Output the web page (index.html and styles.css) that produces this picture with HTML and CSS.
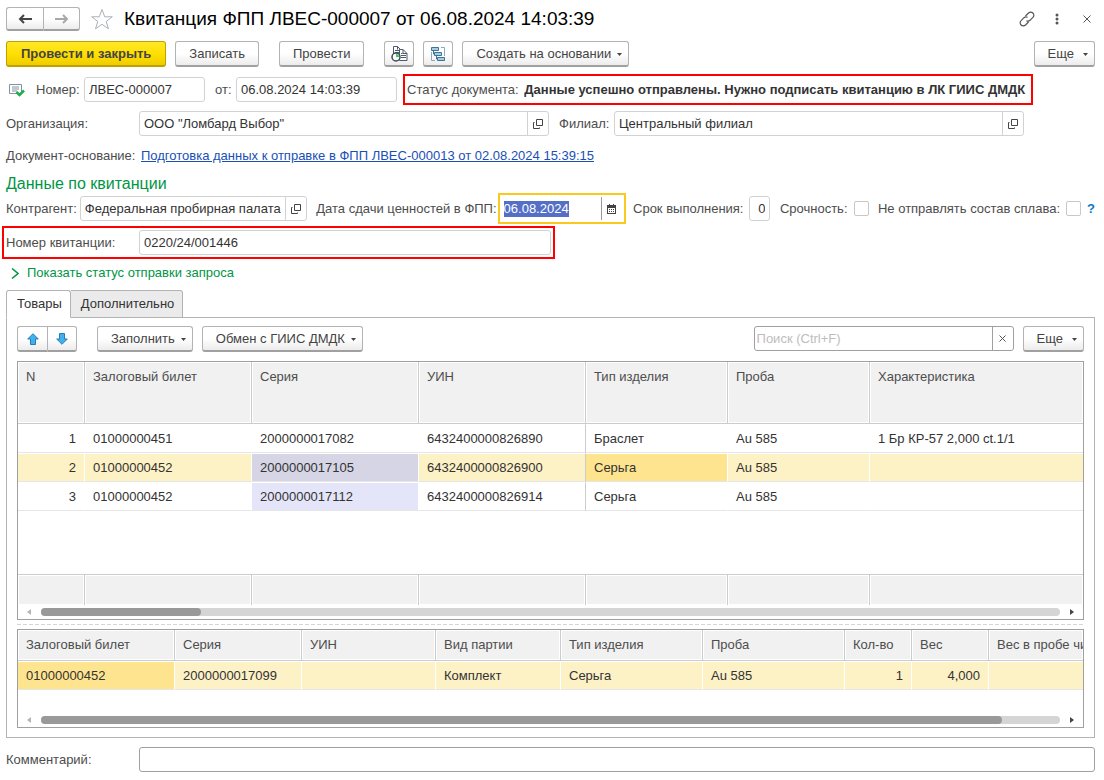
FILE: index.html
```html
<!DOCTYPE html>
<html lang="ru">
<head>
<meta charset="utf-8">
<title>Квитанция ФПП ЛВЕС-000007</title>
<link rel="stylesheet" href="styles.css">
</head>
<body>
<svg class="defs" aria-hidden="true">
  <symbol id="open" viewBox="0 0 10 10"><path d="M3.500 .5h6v6h-6zM1.500 3.500h-1v6h6v-1" fill="none" stroke="#444"/></symbol>
  <symbol id="caret" viewBox="0 0 5 3"><path d="M0 0h5L2.500 3z" fill="#444"/></symbol>
  <symbol id="left" viewBox="0 0 4 6"><path d="M4 0v6L0 3z" fill="#b5b5b5"/></symbol>
  <symbol id="right" viewBox="0 0 4 6"><path d="M0 0v6L4 3z" fill="#444"/></symbol>
</svg>
<main class="page">
  <header class="titlebar">
    <div class="pair">
      <button class="btn" aria-label="Назад"><svg width="15" height="10" viewBox="0 0 15 10"><path d="M14 5H3M6 1L2 5l4 4" fill="none" stroke="#444" stroke-width="2"/></svg></button>
      <button class="btn" aria-label="Вперед"><svg width="15" height="10" viewBox="0 0 15 10"><path d="M1 5h11M9 1l4 4-4 4" fill="none" stroke="#a8a8a8" stroke-width="2"/></svg></button>
    </div>
    <button class="plain star" aria-label="В избранное"><svg width="24" height="22" viewBox="0 0 24 22"><path d="M12 1.500l2.700 7.300h7.600l-6.100 4.700 2.300 7.300-6.500-4.500-6.500 4.500 2.300-7.300-6.100-4.700h7.600z" fill="#fff" stroke="#a9b0b9"/></svg></button>
    <h1 class="title">Квитанция ФПП ЛВЕС-000007 от 06.08.2024 14:03:39</h1>
    <div class="window-tools">
      <button class="plain" aria-label="Ссылка"><svg width="16" height="16" viewBox="0 0 16 16" fill="none" stroke="#555" stroke-width="1.200"><path d="M6.500 5l3-3a3 3 0 0 1 4.400 0 3 3 0 0 1 0 4.400L11 9.300a3 3 0 0 1-3.600.4M9.500 11l-3 3a3 3 0 0 1-4.400 0 3 3 0 0 1 0-4.400L5 6.700a3 3 0 0 1 3.600-.4"/></svg></button>
      <button class="plain" aria-label="Меню"><svg width="4" height="12" viewBox="0 0 4 12" fill="#555"><circle cx="2" cy="2" r="1.500"/><circle cx="2" cy="6" r="1.500"/><circle cx="2" cy="10" r="1.500"/></svg></button>
      <button class="plain" aria-label="Закрыть"><svg width="8" height="8" viewBox="0 0 8 8"><path d="M.5.5l7 7M7.500.5l-7 7" stroke="#555"/></svg></button>
    </div>
  </header>

  <div class="commands">
    <button class="btn primary">Провести и закрыть</button>
    <button class="btn">Записать</button>
    <button class="btn spaced">Провести</button>
    <button class="btn icon spaced" aria-label="Движения документа"><svg width="17" height="16" viewBox="0 0 17 16"><path d="M2.500 9V.5h4l2.500 2.500v8" fill="#fff" stroke="#4d5a6b"/><path d="M6.500.5v3M4 4.500h4M4 6.500h4" fill="none" stroke="#4d5a6b"/><path d="M8.500 3.500h3.500l4 4v7H8.500z" fill="#fff" stroke="#4d5a6b"/><path d="M12 3.500v4h4M10 7.500h1.500M10 9.500h5M10 11.500h5" fill="none" stroke="#4d5a6b"/><circle cx="5" cy="11" r="4" fill="#fff" stroke="#3c4b57" stroke-width="1.500"/><path d="M5 8a3 3 0 0 1 3 3H5z" fill="#3ccb55"/></svg></button>
    <button class="btn icon" aria-label="Структура подчиненности"><svg width="16" height="16" viewBox="0 0 16 16" fill="#a9cbe3" stroke="#3d7397"><path d="M11 1.500h3.500V10M1.500 6v8.500H5" fill="none" stroke="#8aa9bd"/><path d="M1.500 1.500h7v3h-7zM4.500 6.500h7v3h-7zM7.500 11.500h7v3h-7z"/><path d="M3.500 5v3H4M6.500 10v3H7" fill="none"/></svg></button>
    <button class="btn menu">Создать на основании<svg class="caret"><use href="#caret"/></svg></button>
    <button class="btn menu more push">Еще<svg class="caret"><use href="#caret"/></svg></button>
  </div>

  <div class="row">
    <svg width="17" height="14" viewBox="0 0 17 14"><path d="M.5 1.500h12v9H.5z" fill="#fff" stroke="#8491a3"/><path d="M3 4h7M3 6h7M3 8h5" stroke="#8491a3"/><path d="M7.500 9l3 3L15 7.500" fill="none" stroke="#1fae4b" stroke-width="2.500"/></svg>
    <label class="after-icon" for="num">Номер:</label>
    <input class="field w-num" id="num" value="ЛВЕС-000007">
    <label class="from" for="dt">от:</label>
    <input class="field w-date" id="dt" value="06.08.2024 14:03:39">
    <div class="status marked">Статус документа: <b>Данные успешно отправлены. Нужно подписать квитанцию в ЛК ГИИС ДМДК</b></div>
  </div>

  <div class="row orgs">
    <label class="lead" for="org">Организация:</label>
    <div class="combo w-org"><input id="org" value='ООО "Ломбард Выбор"'><button aria-label="Открыть организацию"><svg width="10" height="10"><use href="#open"/></svg></button></div>
    <label class="branch" for="fil">Филиал:</label>
    <div class="combo w-org"><input id="fil" value="Центральный филиал"><button aria-label="Открыть филиал"><svg width="10" height="10"><use href="#open"/></svg></button></div>
  </div>

  <div class="row base">
    <span class="lead">Документ-основание:</span>
    <a class="link" href="#">Подготовка данных к отправке в ФПП ЛВЕС-000013 от 02.08.2024 15:39:15</a>
  </div>

  <h2 class="section">Данные по квитанции</h2>

  <div class="row spread">
    <div class="item tight"><label for="agent">Контрагент:</label><div class="combo w-agent"><input id="agent" value="Федеральная пробирная палата"><button aria-label="Открыть контрагента"><svg width="10" height="10"><use href="#open"/></svg></button></div></div>
    <div class="item tight"><label for="handover">Дата сдачи ценностей в ФПП:</label><div class="combo current"><input id="handover" value="06.08.2024"><button aria-label="Календарь"><svg width="9" height="10" viewBox="0 0 9 10"><path d="M0 1h9v9H0z" fill="#444"/><path d="M1 4h7v5H1z" fill="#fff"/><path d="M2 5.500h1m1 0h1m1 0h1M2 7.500h1m1 0h1m1 0h1M2.500 0v2M6.500 0v2" stroke="#444"/></svg></button></div></div>
    <div class="item"><label for="term">Срок выполнения:</label><input class="field w-term" id="term" value="0"></div>
    <div class="item"><label for="urgent">Срочность:</label><input class="check" type="checkbox" id="urgent"></div>
    <div class="item"><label for="alloy">Не отправлять состав сплава:</label><input class="check" type="checkbox" id="alloy"><button class="plain help">?</button></div>
  </div>

  <div class="row receipt marked">
    <label class="lead" for="rec">Номер квитанции:</label>
    <input class="field grow" id="rec" value="0220/24/001446">
  </div>

  <button class="plain toggle"><svg width="8" height="11" viewBox="0 0 8 11"><path d="M1 .5l6 5-6 5" fill="none" stroke="#009646" stroke-width="1.500"/></svg>Показать статус отправки запроса</button>

  <div class="tabs" role="tablist">
    <button class="tab active" role="tab" aria-selected="true">Товары</button>
    <button class="tab" role="tab" aria-selected="false">Дополнительно</button>
  </div>

  <section class="panel">
    <div class="toolbar">
      <div class="pair arrows">
        <button class="btn" aria-label="Вверх"><svg width="12" height="12" viewBox="0 0 12 12"><path d="M6 .7L11.300 6H8.500v5.500h-5V6H.7z" fill="#3fb1f0" stroke="#2a7cb0"/></svg></button>
        <button class="btn" aria-label="Вниз"><svg width="12" height="12" viewBox="0 0 12 12"><path d="M6 11.300L.7 6h2.800V.5h5V6h2.800z" fill="#3fb1f0" stroke="#2a7cb0"/></svg></button>
      </div>
      <button class="btn menu spaced">Заполнить<svg class="caret"><use href="#caret"/></svg></button>
      <button class="btn menu">Обмен с ГИИС ДМДК<svg class="caret"><use href="#caret"/></svg></button>
      <div class="combo search push"><input aria-label="Поиск" placeholder="Поиск (Ctrl+F)"><button aria-label="Очистить"><svg width="7" height="7" viewBox="0 0 7 7"><path d="M.5.5l6 6M6.500.5l-6 6" stroke="#555"/></svg></button></div>
      <button class="btn menu more">Еще<svg class="caret"><use href="#caret"/></svg></button>
    </div>

    <div class="grid-box goods">
      <div class="grid-view">
        <table class="grid">
          <colgroup><col class="c67"><col class="c167"><col class="c167"><col class="c167"><col class="c142"><col class="c142"><col></colgroup>
          <thead><tr><th>N</th><th>Залоговый билет</th><th>Серия</th><th>УИН</th><th>Тип изделия</th><th>Проба</th><th>Характеристика</th></tr></thead>
          <tbody>
            <tr><td class="num">1</td><td>01000000451</td><td>2000000017082</td><td class="frozen">6432400000826890</td><td>Браслет</td><td>Au 585</td><td>1 Бр КР-57 2,000 ct.1/1</td></tr>
            <tr class="selected"><td class="num">2</td><td>01000000452</td><td class="series">2000000017105</td><td class="frozen">6432400000826900</td><td class="cursor">Серьга</td><td>Au 585</td><td></td></tr>
            <tr><td class="num">3</td><td>01000000452</td><td class="series">2000000017112</td><td class="frozen">6432400000826914</td><td>Серьга</td><td>Au 585</td><td></td></tr>
            <tr class="filler"><td colspan="7"></td></tr>
          </tbody>
          <tfoot><tr><td></td><td></td><td></td><td></td><td></td><td></td><td></td></tr></tfoot>
        </table>
      </div>
      <div class="scroll"><svg width="4" height="6"><use href="#left"/></svg><div class="track"><div class="thumb" style="width:15.700%"></div></div><svg width="4" height="6"><use href="#right"/></svg></div>
    </div>

    <div class="splitter"></div>

    <div class="grid-box parts">
      <div class="grid-view">
        <table class="grid">
          <colgroup><col class="c157"><col class="c127"><col class="c134"><col class="c125"><col class="c142"><col class="c142"><col class="c67"><col class="c77"><col></colgroup>
          <thead><tr><th>Залоговый билет</th><th>Серия</th><th>УИН</th><th>Вид партии</th><th>Тип изделия</th><th>Проба</th><th>Кол-во</th><th>Вес</th><th class="cut">Вес в пробе чи</th></tr></thead>
          <tbody><tr class="selected"><td class="cursor">01000000452</td><td>2000000017099</td><td></td><td>Комплект</td><td>Серьга</td><td>Au 585</td><td class="num">1</td><td class="num">4,000</td><td></td></tr></tbody>
        </table>
      </div>
      <div class="scroll"><svg width="4" height="6"><use href="#left"/></svg><div class="track"><div class="thumb" style="width:94.300%"></div></div><svg width="4" height="6"><use href="#right"/></svg></div>
    </div>
  </section>

  <div class="row comment">
    <label class="lead" for="com">Комментарий:</label>
    <input class="field dark grow" id="com">
  </div>
</main>
<script src="page.js"></script>
</body>
</html>
```
FILE: page.js
```js
var handover = document.getElementById('handover');
handover.focus();
handover.select();
```
FILE: styles.css
```css
* { box-sizing: border-box; }
body { margin: 0; background: #fff; }
body, button, input { font-family: "Liberation Sans", Arial, sans-serif; font-size: 13px; line-height: 16px; color: #333; }
button, input { margin: 0; }
svg { display: block; flex: none; }
.defs { position: absolute; width: 0; height: 0; }
.page { display: flex; flex-direction: column; min-height: 100vh; padding: 7px 9px 8px 6px; color: #4d4d4d; }

.btn { display: flex; align-items: center; justify-content: center; height: 26px; padding: 0 13px; border: 1px solid #b3b3b3; border-bottom: 2px solid #a0a0a0; border-radius: 3px; background: linear-gradient(#fff 50%, #ececec); color: #444; white-space: nowrap; }
.primary { padding: 0 14px; border-color: #bfa100; background: linear-gradient(#ffe829, #ffe000 50%, #efcd00); font-weight: bold; }
.icon { width: 30px; padding: 0; }
.menu { padding: 0 6px 0 13px; gap: 6px; }
.more { gap: 9px; }
.caret { width: 5px; height: 3px; margin-top: 2px; }
.plain { display: flex; align-items: center; padding: 0; border: 0; background: none; }
.pair { display: flex; }
.pair .btn { width: 37px; height: 24px; padding: 0; }
.pair .btn:first-child { border-radius: 3px 0 0 3px; border-right: 0; }
.pair .btn:last-child { border-radius: 0 3px 3px 0; }
.arrows .btn { width: 30px; height: 26px; }
.push { margin-left: auto; }

.titlebar { display: flex; align-items: center; height: 24px; }
.star { margin: 0 10px; }
.title { margin: 0; font-size: 19px; line-height: 24px; font-weight: normal; color: #000; white-space: nowrap; }
.window-tools { display: flex; align-items: center; gap: 14px; margin-left: auto; }
.window-tools .plain { width: 16px; justify-content: center; }

.commands { display: flex; gap: 9px; margin-top: 10px; }
.commands .spaced { margin-left: 11px; }

.row { display: flex; align-items: center; height: 25px; margin-top: 10px; white-space: nowrap; }
.row > svg { margin-left: 3px; }
.lead { width: 133px; flex: none; }
.after-icon { width: 48px; margin-left: 10px; }
.from { width: 21px; margin-left: 10px; }
.field { height: 25px; padding: 0 4px; border: 1px solid #d2d2d2; border-radius: 3px; background: #fff; outline: 0; min-width: 0; }
.dark { border-color: #a0a0a0; }
.grow { flex: 1; }
.w-num { width: 121px; }
.w-date { width: 161px; }
.w-term { width: 21px; text-align: right; }
.status { margin-left: 8px; padding: 0 6px 0 2px; line-height: 27px; }
.status b { margin-left: 2px; color: #333; }
.marked { outline: 2px solid #f00; }
.combo { display: flex; height: 25px; border: 1px solid #d2d2d2; border-radius: 3px; background: #fff; }
.combo input { flex: 1; width: 0; min-width: 0; padding: 0 4px; border: 0; outline: 0; background: none; }
.combo button { display: flex; align-items: center; justify-content: center; width: 21px; padding: 0; border: 0; border-left: 1px solid #d2d2d2; background: none; }
.orgs { margin-top: 9px; }
.w-org { width: 410px; }
.branch { width: 55px; margin-left: 10px; }
.base { height: 16px; margin-top: 12px; }
.link { margin-left: 2px; color: #1a4fb5; }
.section { margin: 10px 0 2px; font-size: 16px; line-height: 20px; font-weight: normal; color: #009646; }

.spread { justify-content: space-between; margin-top: 0; }
.item { display: flex; align-items: center; gap: 6px; }
.tight { gap: 3px; }
.w-agent { width: 227px; }
.current { width: 124px; height: 27px; border: 0; border-radius: 0; outline: 2px solid #fbc81e; }
.current input { height: 16px; margin: auto; }
.current button { margin: 2px 2px 2px 0; border-left-color: #999; }
.current ::selection { background: #5470c6; color: #fff; }
.check { appearance: none; width: 15px; height: 15px; margin: 0; border: 1px solid #c8c8c8; border-radius: 2px; background: #fff; }
.help { color: #0a78c8; font-weight: bold; }
.receipt { width: 50%; margin-top: 9px; outline-offset: 2px; }
.toggle { align-self: flex-start; gap: 8px; margin: 10px 0 0 5px; color: #009646; }

.tabs { display: flex; z-index: 1; margin-top: 9px; }
.tab { height: 28px; margin-bottom: -1px; padding: 0 8px 0 10px; border: 1px solid #b3b3b3; border-left: 0; border-radius: 0 3px 0 0; background: #ebebeb; }
.tab.active { border-left: 1px solid #b3b3b3; border-radius: 3px 3px 0 0; border-bottom-color: #fff; background: #fff; }
.panel { display: flex; flex: 1; flex-direction: column; padding: 8px 10px 9px; border: 1px solid #b3b3b3; }
.toolbar { display: flex; gap: 9px; margin-bottom: 9px; }
.toolbar .spaced { margin-left: 11px; }
.search { width: 260px; border-color: #a0a0a0; }
.search input { padding: 0 2px; }
.search button { border-left-color: #a0a0a0; }
.search ::placeholder { color: #bdbdbd; }

.grid-box { display: flex; flex-direction: column; border: 1px solid #a0a0a0; overflow: hidden; }
.goods { flex: 1; }
.parts { height: 99px; }
.grid-view { display: flex; flex: 1; }
.grid { width: 100%; table-layout: fixed; border-collapse: separate; border-spacing: 0; align-self: flex-start; }
.goods .grid { align-self: stretch; }
.grid th, .grid td { padding: 0 8px; overflow: hidden; text-align: left; white-space: nowrap; }
.grid th { height: 31px; font-weight: normal; color: #4d4d4d; background: #f1f1f1; border-right: 1px solid #ccc; border-bottom: 1px solid #ccc; box-shadow: inset 0 0 0 1px #fff; }
.grid .cut { padding-right: 0; }
.goods th { height: 62px; padding-top: 7px; vertical-align: top; }
.grid td { height: 29px; border-top: 1px solid #fff; border-right: 1px solid #fff; border-bottom: 1px solid #e6e6e6; color: #333; background-clip: padding-box; }
.grid .num { text-align: right; }
.grid .frozen { border-right-color: #ccc; }
.grid th:last-child, .grid td:last-child { border-right: 0; }
.selected td { background-color: #fdf1c6; }
.series { background-color: #e5e5fa; }
.selected .series { background-color: #d5d5e5; }
.selected .cursor { background-color: #ffe48f; }
.grid .filler td { height: auto; border: 0; }
.grid tfoot td { height: 31px; border-top: 1px solid #ccc; border-right: 1px solid #ccc; border-bottom: 0; background: #f1f1f1; box-shadow: inset 0 0 0 1px #fff; }
.scroll { display: flex; align-items: center; justify-content: space-between; gap: 10px; height: 14px; padding: 0 9px; }
.track { flex: 1; height: 8px; border-radius: 4px; background: #d5d5d5; }
.thumb { height: 8px; border-radius: 4px; background: #999; }
.splitter { height: 9px; background: repeating-linear-gradient(90deg, #d5d5d5 0 4px, #fff 4px 6px) 0 4px / 100% 1px no-repeat; }
.comment { margin-top: 9px; }
.c67 { width: 67px; } .c77 { width: 77px; } .c125 { width: 125px; } .c127 { width: 127px; } .c134 { width: 134px; }
.c142 { width: 142px; } .c157 { width: 157px; } .c167 { width: 167px; }
```
